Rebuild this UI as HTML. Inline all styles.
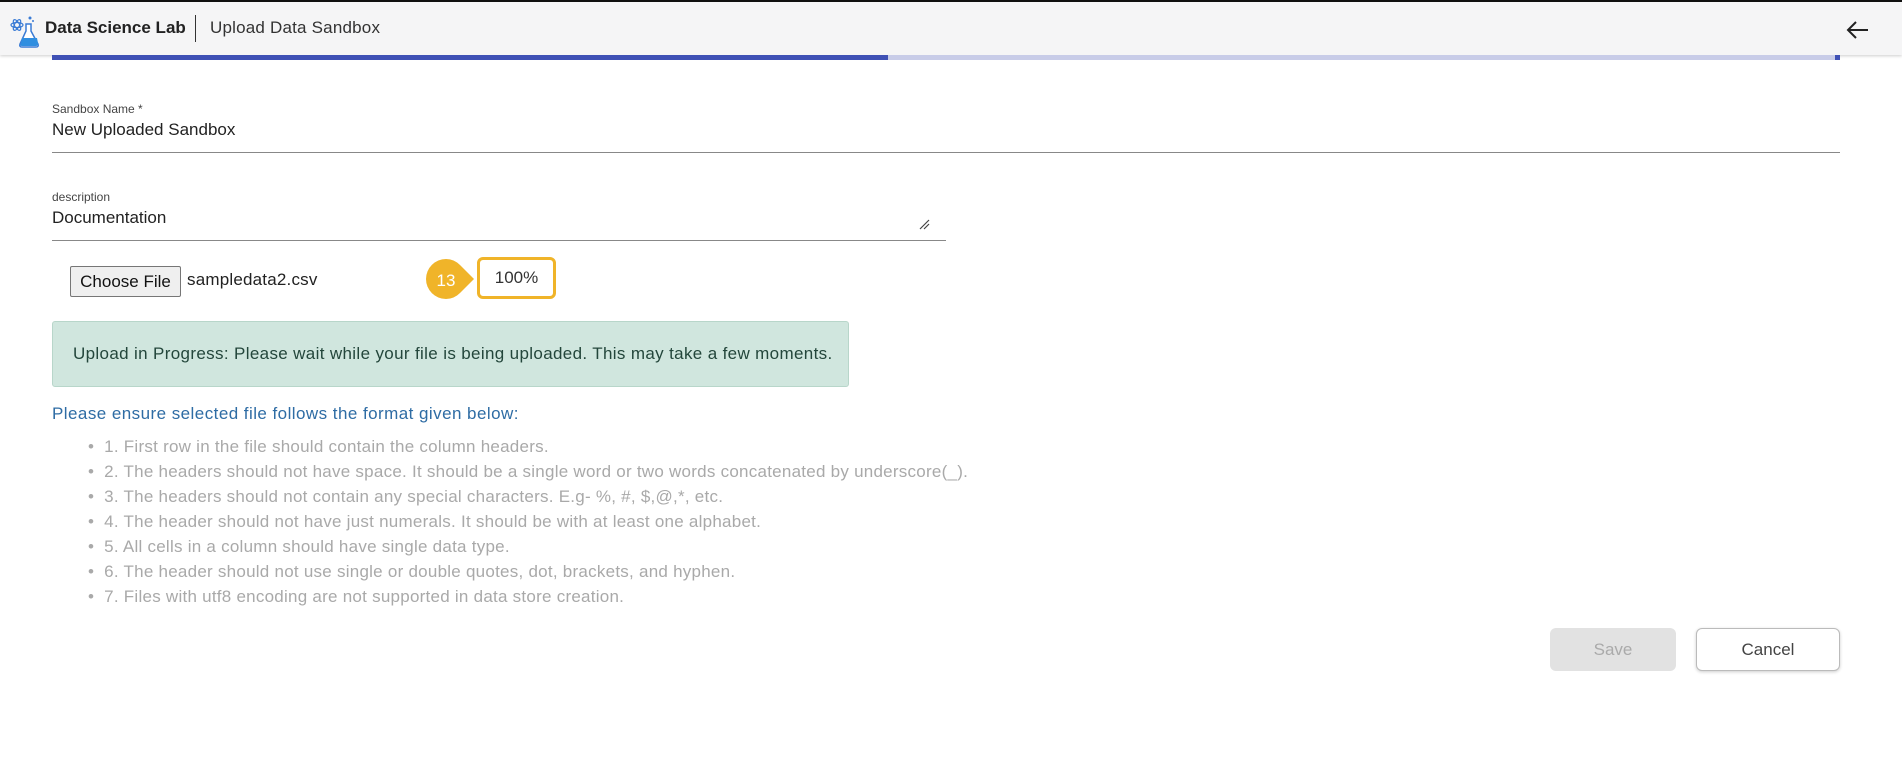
<!DOCTYPE html>
<html><head><meta charset="utf-8"><style>
*{box-sizing:border-box;margin:0;padding:0}
body{width:1902px;height:761px;background:#fff;font-family:"Liberation Sans",sans-serif;position:relative;overflow:hidden;color:#222}
.a{position:absolute;white-space:nowrap}
</style></head><body>
<div class="a" style="left:0;top:0;width:1902px;height:2px;background:#111"></div>
<div class="a" style="left:0;top:2px;width:1902px;height:53px;background:#f5f5f6;box-shadow:0 1px 3px rgba(0,0,0,.2)"></div>
<svg class="a" style="left:9px;top:14px" width="32" height="34" viewBox="0 0 32 34">
<g fill="none" stroke="#3a7bd5" stroke-width="1.2"><ellipse cx="8" cy="11" rx="6" ry="2.5"/><ellipse cx="8" cy="11" rx="6" ry="2.5" transform="rotate(60 8 11)"/><ellipse cx="8" cy="11" rx="6" ry="2.5" transform="rotate(-60 8 11)"/></g>
<path d="M17 10h5v7l7 13q1 3-2 3H13q-3 0-2-3l6-13z" fill="#fff" stroke="#3a7bd5" stroke-width="1.5"/>
<path d="M13 24h15l1 5q0 3-2 3H13q-3 0-1-3z" fill="#2f8ee0"/>
<circle cx="21" cy="4" r="1.5" fill="#3a7bd5"/><circle cx="24" cy="7" r="1" fill="#3a7bd5"/>
</svg>
<div class="a" style="left:45px;top:18px;font-size:17px;font-weight:bold;color:#222">Data Science Lab</div>
<div class="a" style="left:195px;top:15px;width:1px;height:27px;background:#333"></div>
<div class="a" style="left:210px;top:18px;font-size:17px;color:#333;letter-spacing:0.2px">Upload Data Sandbox</div>
<svg class="a" style="left:1846px;top:20px" width="24" height="20" viewBox="0 0 24 20"><path d="M22 10H3M10 2L2 10l8 8" fill="none" stroke="#222" stroke-width="2"/></svg>
<div class="a" style="left:52px;top:55px;width:836px;height:5px;background:#3f51b5"></div>
<div class="a" style="left:888px;top:55px;width:947px;height:5px;background:#c8cce8"></div>
<div class="a" style="left:1835px;top:55px;width:5px;height:5px;background:#3f51b5"></div>

<div class="a" style="left:52px;top:102px;font-size:12px;color:#444">Sandbox Name *</div>
<div class="a" style="left:52px;top:120px;font-size:17px;color:#222">New Uploaded Sandbox</div>
<div class="a" style="left:52px;top:152px;width:1788px;height:1px;background:#888"></div>

<div class="a" style="left:52px;top:190px;font-size:12px;color:#444">description</div>
<div class="a" style="left:52px;top:208px;font-size:17px;color:#222">Documentation</div>
<svg class="a" style="left:918px;top:218px" width="12" height="12"><path d="M2 11L11 2M6 11L11 6" stroke="#444" stroke-width="1.2"/></svg>
<div class="a" style="left:52px;top:240px;width:894px;height:1px;background:#888"></div>

<div class="a" style="left:70px;top:266px;width:111px;height:31px;background:#efefef;border:1px solid #767676;border-radius:2px;font-size:17px;line-height:29px;text-align:center;color:#111">Choose File</div>
<div class="a" style="left:187px;top:270px;font-size:17px;color:#222;letter-spacing:0.2px">sampledata2.csv</div>

<svg class="a" style="left:424px;top:258px" width="54" height="42"><path d="M22 1a20 20 0 1 0 0 40q8 0 14-6l14-14-14-14q-6-6-14-6z" fill="#f0b429"/><text x="22" y="28" font-family="Liberation Sans" font-size="17" fill="#fff" text-anchor="middle">13</text></svg>
<div class="a" style="left:477px;top:257px;width:79px;height:42px;border:3px solid #f0b429;border-radius:6px;background:#fff;font-size:17px;line-height:36px;text-align:center;color:#333">100%</div>

<div class="a" style="left:52px;top:321px;width:797px;height:66px;background:#d0e6de;border:1px solid #b8d6ca;border-radius:3px"></div>
<div class="a" style="left:73px;top:344px;font-size:17px;color:#23463b;letter-spacing:0.35px">Upload in Progress: Please wait while your file is being uploaded. This may take a few moments.</div>

<div class="a" style="left:52px;top:404px;font-size:17px;color:#2e6ca4;letter-spacing:0.45px">Please ensure selected file follows the format given below:</div>
<div class="a" style="left:88px;top:434px;font-size:17px;color:#a9a9a9;line-height:25px;letter-spacing:0.25px">
<div>•&nbsp;&nbsp;1. First row in the file should contain the column headers.</div>
<div>•&nbsp;&nbsp;2. The headers should not have space. It should be a single word or two words concatenated by underscore(_).</div>
<div>•&nbsp;&nbsp;3. The headers should not contain any special characters. E.g- %, #, $,@,*, etc.</div>
<div>•&nbsp;&nbsp;4. The header should not have just numerals. It should be with at least one alphabet.</div>
<div>•&nbsp;&nbsp;5. All cells in a column should have single data type.</div>
<div>•&nbsp;&nbsp;6. The header should not use single or double quotes, dot, brackets, and hyphen.</div>
<div>•&nbsp;&nbsp;7. Files with utf8 encoding are not supported in data store creation.</div>
</div>

<div class="a" style="left:1550px;top:628px;width:126px;height:43px;background:#e2e2e2;border-radius:6px;font-size:17px;line-height:43px;text-align:center;color:#aaa">Save</div>
<div class="a" style="left:1696px;top:628px;width:144px;height:43px;background:#fff;border:1px solid #bbb;border-radius:6px;box-shadow:0 1px 3px rgba(0,0,0,.2);font-size:17px;line-height:41px;text-align:center;color:#444">Cancel</div>
</body></html>
